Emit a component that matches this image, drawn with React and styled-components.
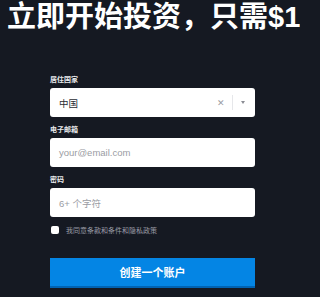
import styled, { createGlobalStyle } from "styled-components";

const GlobalStyle = createGlobalStyle`
  body {
    margin: 0;
    background: #151922;
    font-family: "Liberation Sans", "Noto Sans CJK SC", sans-serif;
  }
`;

const Page = styled.div`
  width: 300px;
  height: 297px;
  overflow: hidden;
  background: #151922;
`;

const Title = styled.h1`
  margin: 0;
  padding: 0 0 0 7px;
  font-size: 29px;
  line-height: 35px;
  font-weight: 700;
  color: #ffffff;
  white-space: nowrap;
`;

const Form = styled.form`
  width: 205px;
  margin: 40px 0 0 50px;
  display: flex;
  flex-direction: column;
`;

const Label = styled.label`
  font-size: 7px;
  line-height: 9px;
  font-weight: 700;
  color: #e8e9ec;
  margin-bottom: 4px;
`;

const Field = styled.div`
  height: 29px;
  background: #ffffff;
  border-radius: 3px;
  display: flex;
  align-items: center;
  padding: 0 0 0 9px;
  margin-bottom: 8px;
  font-size: 9.5px;
  color: ${(p) => (p.$placeholder ? "#9a9ca3" : "#2a2d33")};
`;

const Value = styled.span`
  flex: 1;
`;

const Clear = styled.span`
  color: #9a9ca3;
  font-size: 9px;
  padding: 0 7px 0 0;
`;

const Divider = styled.span`
  width: 1px;
  height: 15px;
  background: #e6e7ea;
`;

const Arrow = styled.span`
  width: 0;
  height: 0;
  margin: 0 10px 0 8px;
  border-left: 2.5px solid transparent;
  border-right: 2.5px solid transparent;
  border-top: 3px solid #8a8c93;
`;

const CheckRow = styled.div`
  display: flex;
  align-items: center;
  gap: 7px;
  margin: 0 0 0 1px;
  height: 10px;
`;

const Box = styled.span`
  width: 8px;
  height: 8px;
  border-radius: 2px;
  background: #ffffff;
`;

const CheckText = styled.span`
  font-size: 7px;
  color: #9a9ca6;
`;

const Button = styled.button`
  margin-top: 23px;
  height: 30px;
  border: 0;
  border-bottom: 2px solid #0063b3;
  border-radius: 0;
  background: #0485e4;
  color: #ffffff;
  font-family: inherit;
  font-size: 11px;
  font-weight: 700;
`;

export default function App() {
  return (
    <Page>
      <GlobalStyle />
      <Title>立即开始投资，只需$1</Title>
      <Form>
        <Label>居住国家</Label>
        <Field>
          <Value>中国</Value>
          <Clear>✕</Clear>
          <Divider />
          <Arrow />
        </Field>
        <Label>电子邮箱</Label>
        <Field $placeholder>
          <Value>your@email.com</Value>
        </Field>
        <Label>密码</Label>
        <Field $placeholder>
          <Value>6+ 个字符</Value>
        </Field>
        <CheckRow>
          <Box />
          <CheckText>我同意条款和条件和隐私政策</CheckText>
        </CheckRow>
        <Button type="button">创建一个账户</Button>
      </Form>
    </Page>
  );
}
